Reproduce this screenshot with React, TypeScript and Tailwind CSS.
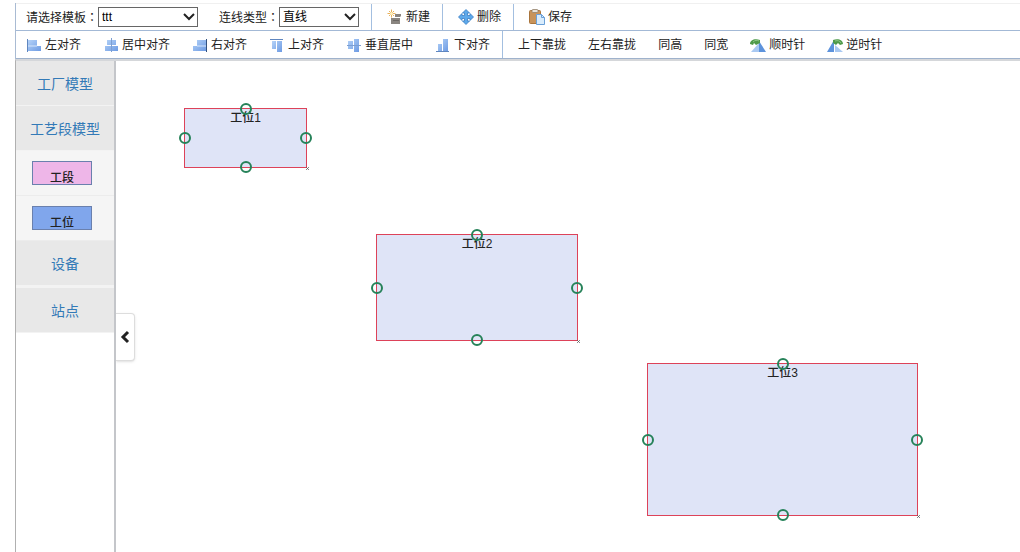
import React, { useState } from 'react';

interface IconProps {
    children: React.ReactNode;
}

const Icon: React.FC<IconProps> = ({ children }) => (
    <svg className="w-4 h-4 shrink-0" viewBox="0 0 16 16" fill="none" aria-hidden="true">
        <defs>
            <linearGradient id="bar" x1="0" y1="0" x2="1" y2="1">
                <stop offset="0" stopColor="#b4d2f8" />
                <stop offset="1" stopColor="#6d9be3" />
            </linearGradient>
        </defs>
        {children}
    </svg>
);

const icons: Record<string, React.ReactNode> = {
    left: (
        <Icon>
            <path d="M1.5 2v13" stroke="#5f86bf" />
            <path d="M2 3h9v6H2zM2 9h13v5H2z" fill="url(#bar)" />
            <path d="M2 9h9" stroke="#d6e6fb" />
        </Icon>
    ),
    center: (
        <Icon>
            <path d="M4 3h9v5H4zM2 9h13v5H2z" fill="url(#bar)" />
            <path d="M8.500 1v14" stroke="#7d9fd2" />
        </Icon>
    ),
    right: (
        <Icon>
            <path d="M5 3h9v6H5zM1 9h13v5H1z" fill="url(#bar)" />
            <path d="M5 9h9" stroke="#d6e6fb" />
            <path d="M14.500 2v13" stroke="#33517f" />
        </Icon>
    ),
    top: (
        <Icon>
            <path d="M1 2.500h13" stroke="#5f86bf" />
            <path d="M3 4h4v8H3zM8 4h5v11H8z" fill="url(#bar)" />
        </Icon>
    ),
    middle: (
        <Icon>
            <path d="M2 4h5v8H2zM8 2h5v13H8z" fill="url(#bar)" />
            <path d="M1 8.500h14" stroke="#7d9fd2" />
        </Icon>
    ),
    bottom: (
        <Icon>
            <path d="M3 7h4v7H3zM8 2h5v12H8z" fill="url(#bar)" />
            <path d="M1 14.500h13" stroke="#5f86bf" />
        </Icon>
    ),
    add: (
        <Icon>
            <path d="M4 9h9v6H4zM8 5h6v2l-1 1H8z" fill="#8a8580" />
            <path d="M6 11.500h6" stroke="#6b6763" />
            <path d="M4.500 0.500v8M0.500 4.500h8M2 2l5 5M7 2L2 7" stroke="#e9b25c" />
            <circle cx="4.500" cy="4.500" r="1.500" fill="#fff3c4" />
        </Icon>
    ),
    remove: (
        <Icon>
            <path
                d="M8 0.500l3.500 3.500h-2v2.500H12v-2L15.500 8 12 11.500v-2H9.500V12h2L8 15.500 4.500 12h2V9.500H4v2L0.500 8 4 4.500v2h2.500V4h-2z"
                fill="#5ea9ea"
                stroke="#3a7fc4"
                strokeWidth="0.800"
            />
        </Icon>
    ),
    save: (
        <Icon>
            <rect x="0.500" y="1.500" width="11" height="13" rx="1" fill="#c8935a" stroke="#a8743c" />
            <rect x="3" y="0.500" width="6" height="3" rx="1" fill="#e8e3da" stroke="#93826b" strokeWidth="0.800" />
            <path d="M7.500 5.500h5l3 3v7h-8z" fill="#d9ecfc" stroke="#6aa0d8" />
            <path d="M12.500 5.500v3h3" stroke="#6aa0d8" />
        </Icon>
    ),
    clockwise: (
        <Icon>
            <path d="M9 6v9H1z" fill="#a9c9f2" />
            <path d="M9 4v11h7z" fill="#5d93dc" />
            <path d="M0 7c0-4 5-6 10-4v3L6 8 4 6 3 8z" fill="#4f9a4a" />
            <path d="M3 5c2-2 4-2 6-1" stroke="#8cc684" />
        </Icon>
    ),
    counter: (
        <Icon>
            <path d="M7 3v12H0z" fill="#5d93dc" />
            <path d="M8 8v7h8z" fill="#a9c9f2" />
            <path d="M6 3c5-2 10 0 10 4l-3 1-2-2-2 2-3-2z" fill="#4f9a4a" />
            <path d="M8 4c3-1 5 0 6 2" stroke="#8cc684" />
        </Icon>
    ),
};

interface ToolButtonProps {
    label: string;
    icon?: string;
}

const ToolButton: React.FC<ToolButtonProps> = ({ label, icon }) => (
    <button type="button" className="flex items-center gap-[3px] px-[10px] whitespace-nowrap hover:bg-blue-50">
        {icon && icons[icon]}
        {label}
    </button>
);

const Divider = () => <span className="w-px self-stretch mr-[3px] bg-[#a3bfe0]" />;

interface SelectFieldProps {
    id: string;
    label: string;
    options: string[];
    width: string;
}

const SelectField: React.FC<SelectFieldProps> = ({ id, label, options, width }) => (
    <div className="flex items-center">
        <label htmlFor={id} className="whitespace-nowrap">
            {label}
            <span className="font-['Noto_Sans_CJK_TC',sans-serif]" lang="zh-Hant">：</span>
        </label>
        <div className={`relative ${width}`}>
            <select id={id} className="block w-full h-5 pl-[3px] pr-4 appearance-none bg-white border border-[#666] text-black">
                {options.map((o) => <option key={o}>{o}</option>)}
            </select>
            <svg className="absolute right-[3px] top-[6px] w-3 h-2 pointer-events-none" viewBox="0 0 12 8" fill="none">
                <path d="M1 1l5 5 5-5" stroke="#222" strokeWidth="2" />
            </svg>
        </div>
    </div>
);

const alignTools = [
    { label: '左对齐', icon: 'left' },
    { label: '居中对齐', icon: 'center' },
    { label: '右对齐', icon: 'right' },
    { label: '上对齐', icon: 'top' },
    { label: '垂直居中', icon: 'middle' },
    { label: '下对齐', icon: 'bottom' },
];

const arrangeTools = [
    { label: '上下靠拢' },
    { label: '左右靠拢' },
    { label: '同高' },
    { label: '同宽' },
    { label: '顺时针', icon: 'clockwise' },
    { label: '逆时针', icon: 'counter' },
];

// Canvas coordinates, relative to the drawing area
const nodes = [
    { name: '工位1', left: 68, top: 47, width: 123, height: 60 },
    { name: '工位2', left: 260, top: 173, width: 202, height: 107 },
    { name: '工位3', left: 531, top: 302, width: 271, height: 153 },
];

const anchors = [
    'left-1/2 top-0',
    'left-full top-1/2',
    'left-1/2 top-full',
    'left-0 top-1/2',
];

const MenuItem = ({ label }: { label: string }) => (
    <button type="button" className="block w-full h-[45px] pt-px bg-[#e8e8e8] text-sm text-[#337ab7] border-b border-[#f3f3f3]">
        {label}
    </button>
);

const Palette = ({ label, color }: { label: string; color: string }) => (
    <div className="h-[45px] pt-[10px] pl-4 bg-[#f5f5f5] border-b border-[#ececec]">
        <div className={`w-[60px] h-6 pt-[7px] overflow-hidden border border-[#6a80ad] text-center leading-[18px] font-medium text-[#222] ${color}`}>
            {label}
        </div>
    </div>
);

const App: React.FC = () => {
    const [open, setOpen] = useState(true);

    return (
        <div className="min-h-screen flex flex-col pl-[15px] pt-[3px] bg-white text-xs text-[#222] font-['Liberation_Sans','Noto_Sans_CJK_SC',sans-serif]">
            <header className="border-l border-[#a9bbd3]">
                <div className="flex items-center gap-[2px] h-7 border-t border-[#f0f0f0] border-b border-b-[#a3b9d6]">
                    <div className="flex gap-[21px] px-[10px]">
                        <SelectField id="template" label="请选择模板" options={['ttt']} width="w-[100px]" />
                        <SelectField id="line" label="连线类型" options={['直线', '折线']} width="w-20" />
                    </div>
                    <Divider />
                    <ToolButton label="新建" icon="add" />
                    <Divider />
                    <ToolButton label="删除" icon="remove" />
                    <Divider />
                    <ToolButton label="保存" icon="save" />
                </div>
                <div className="flex items-center gap-[2px] h-7 border-b border-[#9fb2cc]">
                    {alignTools.map((t) => <ToolButton key={t.label} {...t} />)}
                    <Divider />
                    {arrangeTools.map((t) => <ToolButton key={t.label} {...t} />)}
                </div>
            </header>

            <main className="flex-1 flex border-t-2 border-l border-t-[#d5d7da] border-l-[#b0b0b0]">
                {open && (
                    <aside className="w-[100px] shrink-0 border-r-2 border-[#c4c6ca]">
                        <MenuItem label="工厂模型" />
                        <MenuItem label="工艺段模型" />
                        <Palette label="工段" color="bg-[#eeb6e8]" />
                        <Palette label="工位" color="bg-[#80a6ec]" />
                        <div className="flex flex-col gap-[2px] bg-[#f3f3f3]">
                            <MenuItem label="设备" />
                            <MenuItem label="站点" />
                        </div>
                    </aside>
                )}
                <section className="relative flex-1 overflow-hidden">
                    <button
                        type="button"
                        aria-label="切换侧栏"
                        onClick={() => setOpen(!open)}
                        className="absolute left-0 top-[252px] w-[19px] h-12 flex items-center justify-center bg-white border border-l-0 border-[#ddd] rounded-r shadow"
                    >
                        <svg className="w-3 h-[14px]" viewBox="0 0 12 14" fill="none">
                            <path d="M9 2L4 7l5 5" stroke="#222" strokeWidth="3" />
                        </svg>
                    </button>
                    {nodes.map((n) => (
                        <div
                            key={n.name}
                            className="absolute bg-[#dfe4f7] border border-[#dd4259] text-center leading-[18px] font-medium"
                            style={{ left: n.left, top: n.top, width: n.width, height: n.height }}
                        >
                            {n.name}
                            {anchors.map((a) => (
                                <span key={a} className={`absolute w-3 h-3 -translate-x-1/2 -translate-y-1/2 rounded-full border-2 border-[#268259] ${a}`} />
                            ))}
                            <svg className="absolute left-full top-full w-[3px] h-[3px]" viewBox="0 0 3 3">
                                <path d="M0 0l3 3M3 0L0 3" stroke="#555" strokeWidth="0.700" />
                            </svg>
                        </div>
                    ))}
                </section>
            </main>
        </div>
    );
};

export default App;
